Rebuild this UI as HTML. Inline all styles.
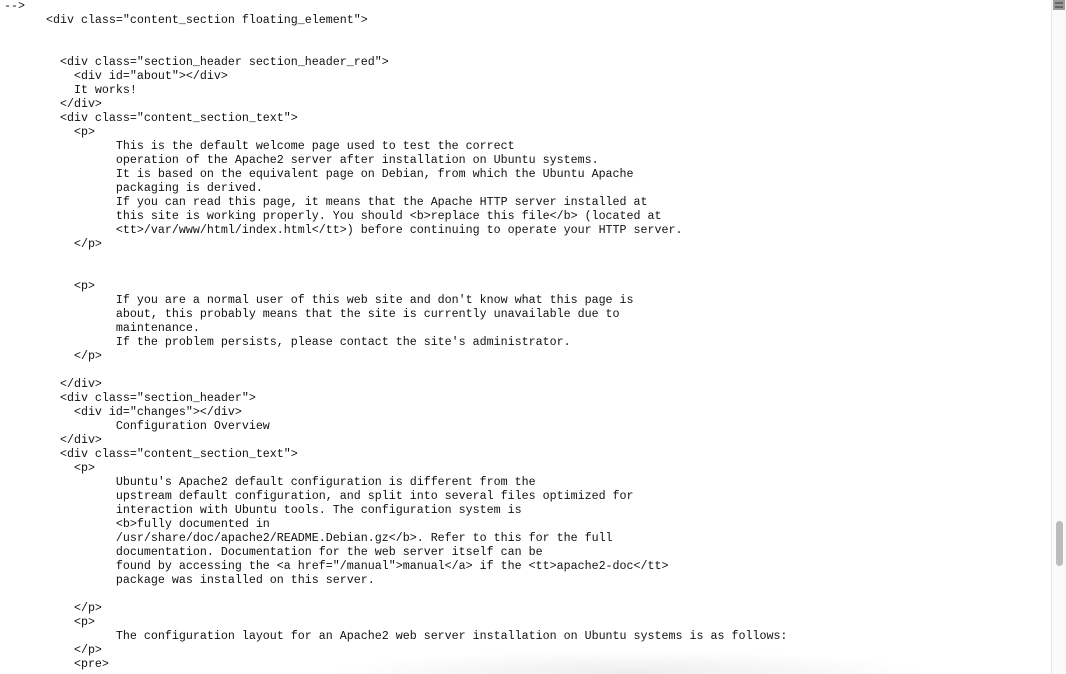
<!DOCTYPE html>
<html><head><meta charset="utf-8"><style>
html,body{margin:0;padding:0;background:#fff;width:1066px;height:674px;overflow:hidden;position:relative}
pre{margin:0;position:absolute;left:4px;top:-1px;font-family:"Liberation Mono",monospace;font-size:11.67px;line-height:14px;color:#111;white-space:pre}
.sb{position:absolute;left:1051px;top:0;width:15px;height:674px;background:#fafafa;border-left:1px solid #e6e6e6;box-sizing:border-box}
.th{position:absolute;left:1056px;top:521px;width:7px;height:45px;border-radius:4px;background:#bcbcbc}
.ic{position:absolute;left:1053px;top:0;width:12px;height:10px;background:#9a9a9a}
.ic i{position:absolute;left:2px;width:8px;height:2px;background:#666}
.sh{position:absolute;left:250px;top:645px;width:760px;height:29px;background:radial-gradient(ellipse 50% 100% at 50% 100%,rgba(0,0,0,0.07),rgba(0,0,0,0) 80%)}
</style></head><body>
<div class="sh"></div>
<pre>-->
      &lt;div class="content_section floating_element"&gt;


        &lt;div class="section_header section_header_red"&gt;
          &lt;div id="about"&gt;&lt;/div&gt;
          It works!
        &lt;/div&gt;
        &lt;div class="content_section_text"&gt;
          &lt;p&gt;
                This is the default welcome page used to test the correct 
                operation of the Apache2 server after installation on Ubuntu systems.
                It is based on the equivalent page on Debian, from which the Ubuntu Apache
                packaging is derived.
                If you can read this page, it means that the Apache HTTP server installed at
                this site is working properly. You should &lt;b&gt;replace this file&lt;/b&gt; (located at
                &lt;tt&gt;/var/www/html/index.html&lt;/tt&gt;) before continuing to operate your HTTP server.
          &lt;/p&gt;


          &lt;p&gt;
                If you are a normal user of this web site and don't know what this page is
                about, this probably means that the site is currently unavailable due to
                maintenance.
                If the problem persists, please contact the site's administrator.
          &lt;/p&gt;

        &lt;/div&gt;
        &lt;div class="section_header"&gt;
          &lt;div id="changes"&gt;&lt;/div&gt;
                Configuration Overview
        &lt;/div&gt;
        &lt;div class="content_section_text"&gt;
          &lt;p&gt;
                Ubuntu's Apache2 default configuration is different from the
                upstream default configuration, and split into several files optimized for
                interaction with Ubuntu tools. The configuration system is
                &lt;b&gt;fully documented in
                /usr/share/doc/apache2/README.Debian.gz&lt;/b&gt;. Refer to this for the full
                documentation. Documentation for the web server itself can be
                found by accessing the &lt;a href="/manual"&gt;manual&lt;/a&gt; if the &lt;tt&gt;apache2-doc&lt;/tt&gt;
                package was installed on this server.

          &lt;/p&gt;
          &lt;p&gt;
                The configuration layout for an Apache2 web server installation on Ubuntu systems is as follows:
          &lt;/p&gt;
          &lt;pre&gt;</pre>
<div class="sb"></div>
<div class="th"></div>
<div class="ic"><i style="top:2px"></i><i style="top:6px"></i></div>
</body></html>
